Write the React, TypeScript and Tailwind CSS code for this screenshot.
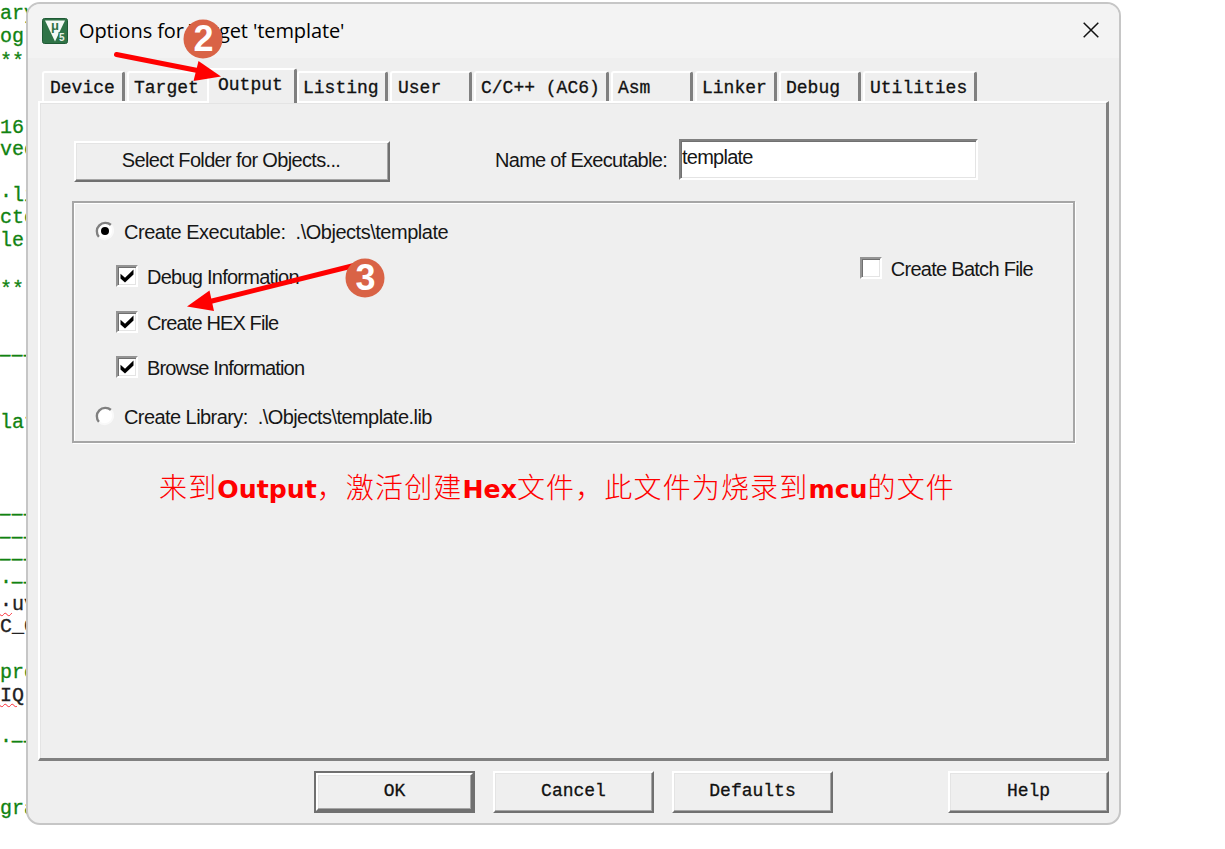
import { useState } from "react";
import clsx from "clsx";

type CodeLine = { text: string; dark?: boolean; typo?: string; dashes?: string };

const codeLines: CodeLine[] = [
  { text: "ary" },
  { text: "ogr" },
  { text: "***" },
  { text: "" },
  { text: "" },
  { text: "16" },
  { text: "vec" },
  { text: "" },
  { text: "·li" },
  { text: "cto" },
  { text: "le" },
  { text: "" },
  { text: "***" },
  { text: "" },
  { text: "" },
  { text: "", dashes: "———" },
  { text: "" },
  { text: "" },
  { text: "lat" },
  { text: "" },
  { text: "" },
  { text: "" },
  { text: "", dashes: "———" },
  { text: "", dashes: "———" },
  { text: "", dashes: "———" },
  { text: "·", dashes: "——" },
  { text: "uv", dark: true, typo: "·" },
  { text: "C_C", dark: true },
  { text: "" },
  { text: "pro" },
  { text: "", dark: true, typo: "IQ" },
  { text: "" },
  { text: "·", dashes: "——" },
  { text: "" },
  { text: "" },
  { text: "gra" },
];

const tabs = [
  { name: "Device", width: "w-[83px]", pad: "pl-[6px]" },
  { name: "Target", width: "w-[80px]", pad: "pl-[5px]" },
  { name: "Output", width: "w-[90px]", pad: "pl-[9px]" },
  { name: "Listing", width: "w-[91px]", pad: "pl-[4px]" },
  { name: "User", width: "w-[82px]", pad: "pl-[6px]" },
  { name: "C/C++ (AC6)", width: "w-[135px]", pad: "pl-[5px]" },
  { name: "Asm", width: "w-[82px]", pad: "pl-[5px]" },
  { name: "Linker", width: "w-[82px]", pad: "pl-[5px]" },
  { name: "Debug", width: "w-[82px]", pad: "pl-[5px]" },
  { name: "Utilities", width: "w-[114px]", pad: "pl-[5px]" },
];

const raised =
  "border-2 border-t-white border-l-white border-r-[#707070] border-b-[#707070] shadow-[inset_-1px_-1px_0_#a6a6a6,inset_1px_1px_0_#e4e4e4]";
const mono =
  "font-['Liberation_Mono','Noto_Sans_CJK_SC',monospace] [-webkit-text-stroke:0.3px_currentColor]";

const Editor = () => (
  <div
    className={`flex w-[60px] flex-col overflow-hidden pt-[3px] text-[20px] text-[#118311] ${mono}`}
  >
    {codeLines.map((line, i) => (
      <div
        key={i}
        className={clsx(
          "h-[22.72px] shrink-0 leading-[22.72px] whitespace-pre",
          line.dark && "text-[#222]",
          line.text === "***" && "pt-[3px]"
        )}
      >
        {line.typo && (
          <span className="underline decoration-red-500 decoration-wavy decoration-1 underline-offset-2">
            {line.typo}
          </span>
        )}
        {line.text}
        {line.dashes && (
          <span className="text-[17px] tracking-[1.8px] [-webkit-text-stroke:0.6px_currentColor]">
            {line.dashes}
          </span>
        )}
      </div>
    ))}
  </div>
);

const AppLogo = () => (
  <svg width="26" height="26" viewBox="0 0 26 26">
    <rect x="0.5" y="0.5" width="25" height="25" rx="2" fill="#2f7347" stroke="#1f5a35" />
    <path d="M3 2.500h20l-10 21z" fill="#f5faf6" />
    <text x="9" y="11.500" fontSize="13" fontWeight="700" fill="#2f7347" fontFamily="Liberation Sans, sans-serif">
      μ
    </text>
    <path d="M16.500 14h8v10h-8z" fill="#2f7347" />
    <text x="17" y="22.500" fontSize="10" fontWeight="700" fill="#e4f0e7" fontFamily="Liberation Sans, sans-serif">
      5
    </text>
  </svg>
);

const Tick = () => (
  <svg width="14" height="14" viewBox="0 0 14 14">
    <path d="M0.500 4.800l4.500 4L13.500 0.500v5l-8.500 8L0.500 9.400z" fill="#000" />
  </svg>
);

type OptionProps = {
  label: string;
  checked: boolean;
  onChange: () => void;
  tracking: string;
};

const CheckBox = ({ label, checked, onChange, tracking }: OptionProps) => (
  <button onClick={onChange} className="flex h-[22px] items-center gap-[9px]">
    <span className="flex size-[22px] items-center justify-center border-2 border-t-[#949494] border-r-white border-b-white border-l-[#949494] bg-white shadow-[inset_1px_1px_0_#707070,inset_-1px_-1px_0_#e4e4e4]">
      {checked && <Tick />}
    </span>
    <span className={`relative top-px whitespace-pre ${tracking}`}>{label}</span>
  </button>
);

const Radio = ({ label, checked, onChange, tracking }: OptionProps) => (
  <button onClick={onChange} className="flex h-[22px] items-center gap-[9px]">
    <svg width="20" height="20" viewBox="0 0 20 20">
      <circle cx="10" cy="10" r="8.500" fill="#fff" />
      <path d="M4 16A8.500 8.500 0 0 1 16 4" fill="none" stroke="#808080" strokeWidth="2.400" />
      <path d="M4 16A8.500 8.500 0 0 0 16 4" fill="none" stroke="#f9f9f9" strokeWidth="2" />
      {checked && <circle cx="10" cy="10" r="4" fill="#000" />}
    </svg>
    <span className={`relative top-px whitespace-pre ${tracking}`}>{label}</span>
  </button>
);

const FooterButton = ({ children, primary }: { children: string; primary?: boolean }) => (
  <button
    className={clsx(
      "h-[42px] w-[161px]",
      primary && "border-2 border-[#707070]"
    )}
  >
    <span className={`flex h-full w-full items-center justify-center pb-px ${raised}`}>
      {children}
    </span>
  </button>
);

// numbered steps and arrows drawn over the dialog
const Annotations = () => (
  <svg
    width="1225"
    height="849"
    viewBox="0 0 1225 849"
    className="pointer-events-none absolute top-0 left-0 z-20"
  >
    <g fontFamily="Liberation Sans, sans-serif" fontWeight="700" fontSize="36" textAnchor="middle">
      <circle cx="203" cy="39" r="19.500" fill="#d96346" />
      <text x="203.500" y="51" fill="#fff">2</text>
      <path d="M116.500 54.500L200 71" stroke="#f00" strokeWidth="5" strokeLinecap="round" />
      <path d="M198.500 61l22.500 15.500-27.500 4.500z" fill="#f00" />
      <path d="M354 265.500L210 301.500" stroke="#f00" strokeWidth="5" />
      <path d="M209.500 290.500L187 306.500l27 4.500z" fill="#f00" />
      <circle cx="365" cy="278" r="19.500" fill="#d96346" />
      <text x="365.500" y="290" fill="#fff">3</text>
    </g>
  </svg>
);

const App = () => {
  const [activeTab, setActiveTab] = useState("Output");
  const [target, setTarget] = useState("executable");
  const [name, setName] = useState("template");
  const [options, setOptions] = useState({
    debug: true,
    hex: true,
    browse: true,
    batch: false,
  });

  const toggle = (key: keyof typeof options) => {
    setOptions((prev) => ({ ...prev, [key]: !prev[key] }));
  };

  return (
    <div className="relative h-[849px] w-[1225px] overflow-hidden bg-white">
      <Editor />

      <div className="absolute top-[2px] left-[26px] flex h-[823px] w-[1095px] flex-col overflow-hidden rounded-[14px] border-2 border-[#c6c6c6] bg-[#efefef] text-black">
        <div className="flex h-[54px] shrink-0 items-center justify-between bg-[#f3f3f3] pr-[20px] pl-[14px]">
          <div className="flex items-center gap-[11px]">
            <AppLogo />
            <span className="font-['Open_Sans',sans-serif] text-[20px] tracking-[-0.1px] whitespace-pre">
              Options for Target 'template'
            </span>
          </div>
          <svg width="16" height="16" viewBox="0 0 16 16" className="relative -top-px">
            <path d="M0.700 0.700l14.600 14.600M15.300 0.700L0.700 15.300" stroke="#111" strokeWidth="1.500" />
          </svg>
        </div>

        <div className={`flex h-[43px] shrink-0 items-end pl-[14px] text-[18px] text-[#111] ${mono}`}>
          {tabs.map((tab) => {
            const active = tab.name === activeTab;
            return (
              <button
                key={tab.name}
                onClick={() => setActiveTab(tab.name)}
                className={clsx(
                  "shrink-0 rounded-t-[3px] border-t-2 border-l-2 border-white text-left whitespace-pre",
                  tab.width,
                  tab.pad,
                  active
                    ? "relative z-10 -mb-[2px] h-[35px] border-r-[3px] border-r-[#808080] bg-[#efefef] pb-[3px]"
                    : "h-[30px] pt-[2px]",
                  !active && tab.name !== "Target" && "mr-[2px] border-r-[3px] border-r-[#808080]"
                )}
              >
                {tab.name}
              </button>
            );
          })}
        </div>

        <div className="ml-[10px] flex h-[660px] w-[1071px] shrink-0 flex-col border-t-2 border-r-[3px] border-b-[3px] border-l-2 border-t-white border-r-[#808080] border-b-[#808080] border-l-white px-[33px] pt-[36px] font-['Liberation_Sans',sans-serif] text-[20px] leading-[22px] text-[#161616] shadow-[inset_1px_1px_0_#e4e4e4]">
          <div className="flex h-[43px] items-start">
            <button
              className={`mt-[2px] ml-px flex h-[41px] w-[316px] items-center justify-center pr-[2px] pb-[3px] tracking-[-0.650px] ${raised}`}
            >
              Select Folder for Objects...
            </button>
            <span className="mt-[10px] ml-[105px] w-[184px] tracking-[-0.720px] whitespace-pre">
              Name of Executable:
            </span>
            <input
              value={name}
              onChange={(e) => setName(e.target.value)}
              className="h-[41px] w-[299px] border-2 border-t-[#808080] border-r-white border-b-white border-l-[#808080] bg-white pb-[5px] pl-[1px] tracking-[-0.750px] shadow-[inset_1px_1px_0_#707070,inset_-1px_-1px_0_#e4e4e4] outline-none"
            />
          </div>

          <div className="mt-[19px] -ml-px flex h-[242px] w-[1003px] shrink-0 items-start justify-between border-2 border-[#a6a6a6] pt-[17px] pr-[40px] pl-[21px] shadow-[inset_1px_1px_0_#fff,1px_1px_0_#fff]">
            <div className="flex flex-col items-start">
              <Radio
                label={"Create Executable:  .\\Objects\\template"}
                checked={target === "executable"}
                onChange={() => setTarget("executable")}
                tracking="tracking-[-0.480px]"
              />
              <div className="mt-[23px] ml-[21px] flex flex-col items-start gap-[23.500px]">
                <CheckBox
                  label="Debug Information"
                  checked={options.debug}
                  onChange={() => toggle("debug")}
                  tracking="tracking-[-0.750px]"
                />
                <CheckBox
                  label="Create HEX File"
                  checked={options.hex}
                  onChange={() => toggle("hex")}
                  tracking="tracking-[-0.880px]"
                />
                <CheckBox
                  label="Browse Information"
                  checked={options.browse}
                  onChange={() => toggle("browse")}
                  tracking="tracking-[-0.840px]"
                />
              </div>
              <div className="mt-[27px]">
                <Radio
                  label={"Create Library:  .\\Objects\\template.lib"}
                  checked={target === "library"}
                  onChange={() => setTarget("library")}
                  tracking="tracking-[-0.570px]"
                />
              </div>
            </div>
            <div className="mt-[37px]">
              <CheckBox
                label="Create Batch File"
                checked={options.batch}
                onChange={() => toggle("batch")}
                tracking="tracking-[-0.720px]"
              />
            </div>
          </div>

          <p className="mt-[26px] ml-[86px] font-['DejaVu_Sans','Noto_Sans_CJK_SC',sans-serif] text-[28px] leading-[40px] font-light tracking-[1.150px] whitespace-nowrap text-[#f00]">
            来到
            <b className="text-[25.200px] font-bold tracking-normal">Output</b>
            ，激活创建
            <b className="text-[25.200px] font-bold tracking-normal">Hex</b>
            文件，此文件为烧录到
            <b className="text-[25.200px] font-bold tracking-normal">mcu</b>
            的文件
          </p>
        </div>

        <div className={`flex pt-[10px] pl-[286px] text-[18px] text-[#111] ${mono}`}>
          <FooterButton primary>OK</FooterButton>
          <div className="ml-[18px] flex gap-[18px]">
            <FooterButton>Cancel</FooterButton>
            <FooterButton>Defaults</FooterButton>
          </div>
          <div className="ml-[115px]">
            <FooterButton>Help</FooterButton>
          </div>
        </div>
      </div>

      <Annotations />
    </div>
  );
};

export default App;
